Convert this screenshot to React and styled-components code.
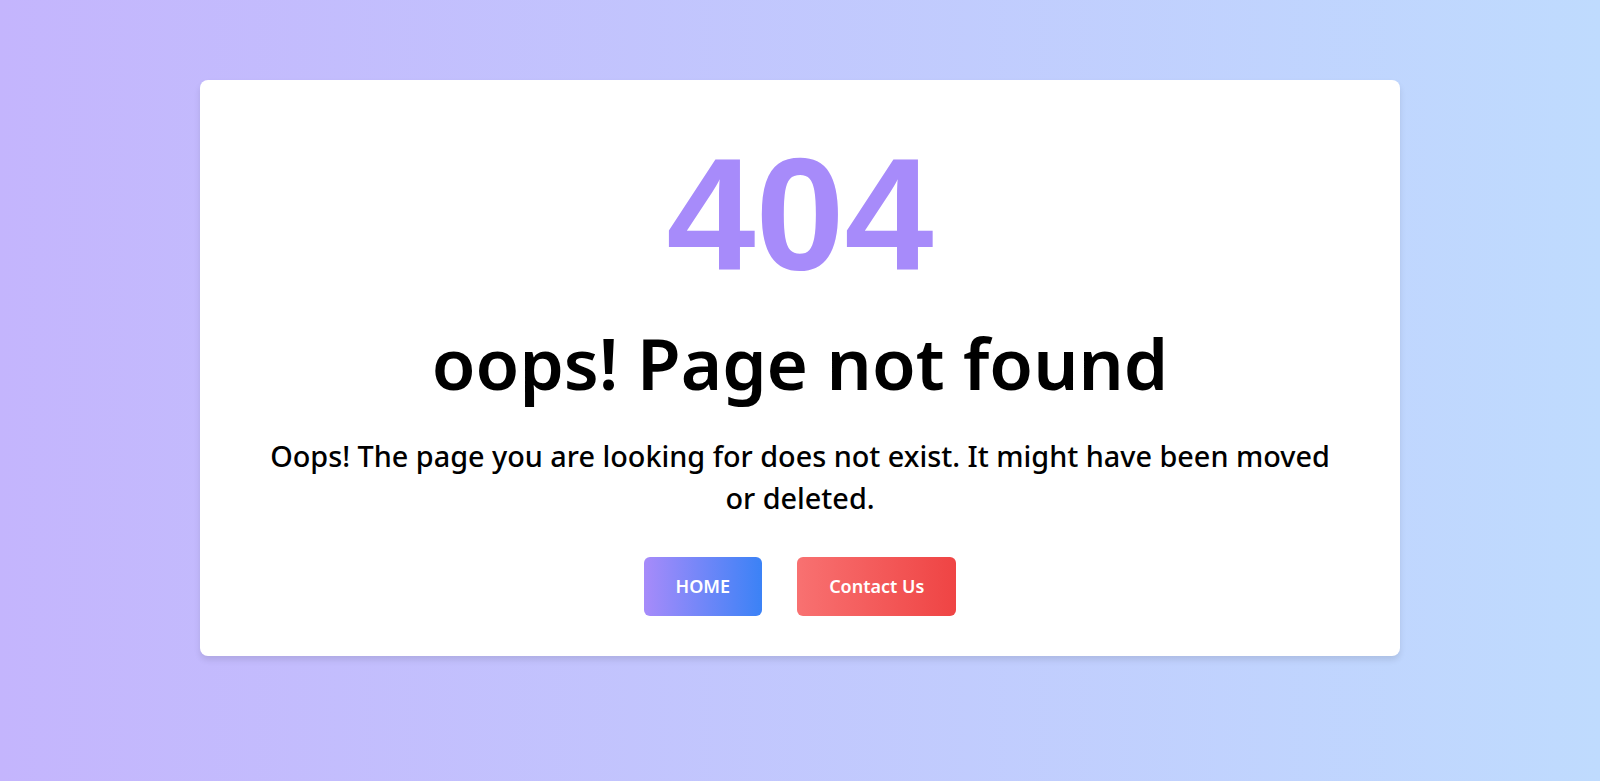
import React from 'react';
import styled, {createGlobalStyle} from 'styled-components';

const GlobalStyle = createGlobalStyle`
  * {
    box-sizing: border-box;
  }

  body {
    margin: 0;
    min-height: 100vh;
    font-family: "Noto Sans", "Open Sans", sans-serif;
    background: linear-gradient(90deg, #c4b5fd, #bfdbfe);
  }
`;

const Page = styled.main`
  min-height: 100vh;
  padding-top: 80px;
`;

const Card = styled.section`
  width: 1200px;
  margin: 0 auto;
  padding: 54px 64px 40px;
  background: #fff;
  border-radius: 8px;
  box-shadow: 0 4px 6px rgba(0, 0, 0, 0.1);
  text-align: center;
`;

const Code = styled.h1`
  margin: 0;
  font-family: "Liberation Sans", Arial, sans-serif;
  font-size: 160px;
  font-weight: 700;
  line-height: 1;
  color: #a78bfa;
`;

const Title = styled.h2`
  margin: 26px 0 0;
  font-size: 71px;
  font-weight: 600;
  line-height: 1.2;
  color: #000;
`;

const Message = styled.p`
  margin: 30px 0 0;
  font-size: 28.8px;
  font-weight: 500;
  line-height: 42px;
  color: #000;
`;

const Actions = styled.div`
  display: flex;
  justify-content: center;
  gap: 35px;
  margin-top: 38px;
`;

const Button = styled.a`
  display: inline-block;
  padding: 16px 32px;
  border-radius: 6px;
  font-size: 18px;
  font-weight: 600;
  line-height: 27px;
  color: #fff;
  text-decoration: none;
  cursor: pointer;
  background: ${({$variant}) =>
    $variant === 'danger'
      ? 'linear-gradient(90deg, #f87171, #ef4444)'
      : 'linear-gradient(90deg, #a78bfa, #3b82f6)'};
`;

function App() {
  return (
    <>
      <GlobalStyle />
      <Page>
        <Card>
          <Code>404</Code>
          <Title>oops! Page not found</Title>
          <Message>
            Oops! The page you are looking for does not exist. It might have been moved or deleted.
          </Message>
          <Actions>
            <Button href="#">HOME</Button>
            <Button href="#" $variant="danger">Contact Us</Button>
          </Actions>
        </Card>
      </Page>
    </>
  );
}

export default App;
